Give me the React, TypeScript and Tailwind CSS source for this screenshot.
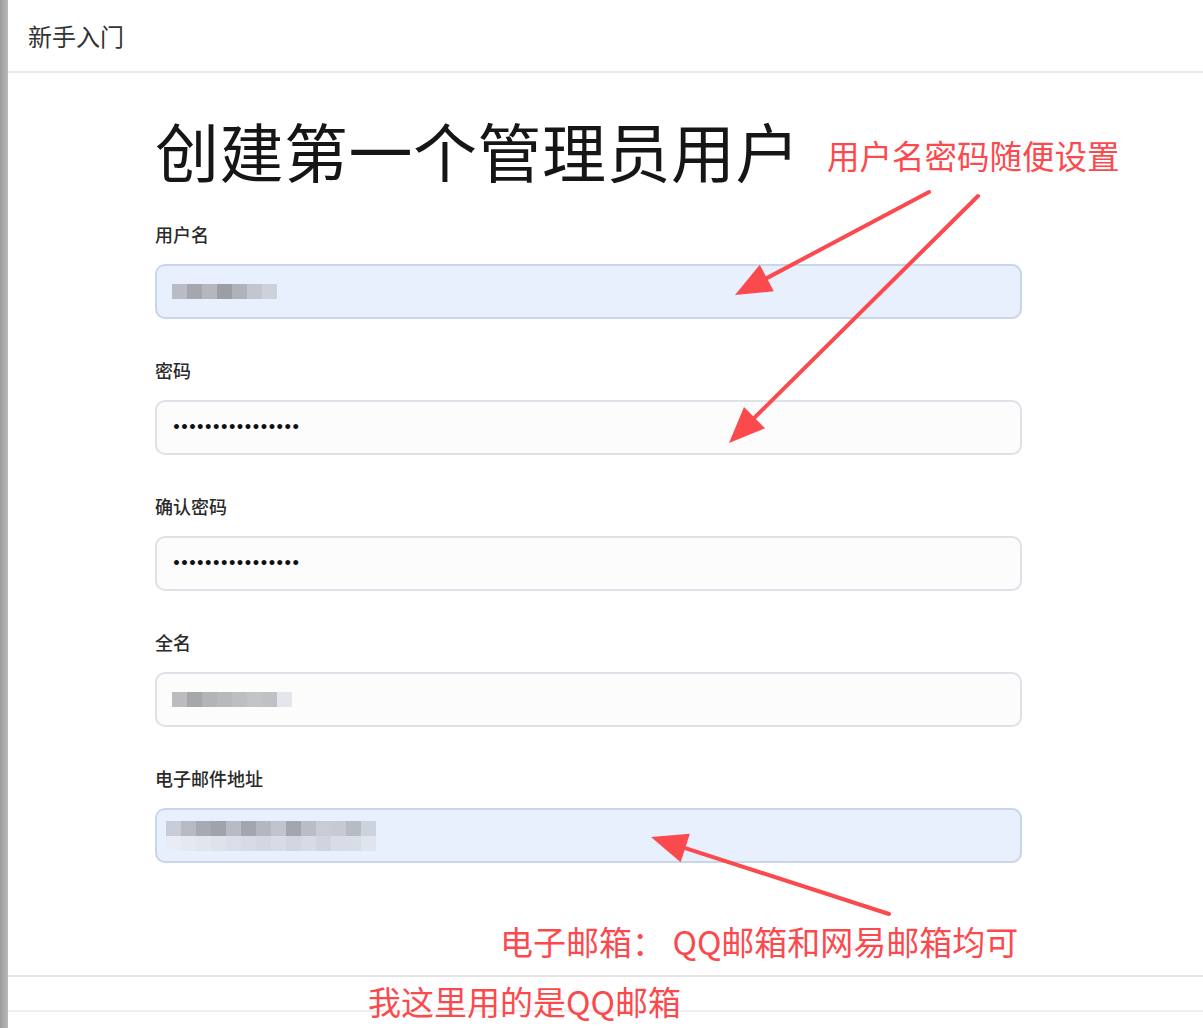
import React from "react";

const cjk = { fontFamily: '"Noto Sans CJK SC", "Noto Sans", sans-serif' };

interface FieldProps {
  label: string;
  filled?: boolean;
  children?: React.ReactNode;
}

const Field: React.FC<FieldProps> = ({ label, filled, children }) => {
  return (
    <div className="mb-[39px]">
      <div className="text-[18px] leading-[24px] text-[#2a2a2a] font-medium mb-[18px]">{label}</div>
      <div
        className={`h-[55px] w-[867px] rounded-[10px] border-2 flex items-center px-[15px] ${
          filled ? "bg-[#e8f0fe] border-[#c9d5e8]" : "bg-[#fcfcfc] border-[#dde2e8]"
        }`}
      >
        {children}
      </div>
    </div>
  );
};

// pixelated blur to stand in for hidden values
const Mosaic: React.FC<{ shades: string[]; size?: number }> = ({ shades, size = 15 }) => (
  <div className="flex blur-[0.6px]">
    {shades.map((c, i) => (
      <div key={i} style={{ background: c, width: size, height: size }} />
    ))}
  </div>
);

const Dots = () => (
  <span className="text-[#111] text-[14px] font-bold tracking-[-1px]" style={{ fontFamily: '"DejaVu Sans", sans-serif' }}>
    ••••••••••••••••
  </span>
);

const Arrow: React.FC<{ x1: number; y1: number; x2: number; y2: number }> = ({ x1, y1, x2, y2 }) => {
  const ang = Math.atan2(y2 - y1, x2 - x1);
  const len = 36;
  const half = 15;
  const bx = x2 - Math.cos(ang) * len;
  const by = y2 - Math.sin(ang) * len;
  const px = -Math.sin(ang) * half;
  const py = Math.cos(ang) * half;
  return (
    <g>
      <line x1={x1} y1={y1} x2={bx} y2={by} stroke="#fb4a4d" strokeWidth={4} strokeLinecap="round" />
      <polygon points={`${x2},${y2} ${bx + px},${by + py} ${bx - px},${by - py}`} fill="#fb4a4d" />
    </g>
  );
};

export default function App() {
  return (
    <div className="w-full h-[1028px] flex bg-white overflow-hidden relative" style={cjk}>
      <div className="w-[8px] h-full bg-gradient-to-r from-[#9c9c9c] to-[#b9b9b9]" />
      <div className="flex-1 flex flex-col">
        <header className="h-[73px] border-b-2 border-[#e9e9e9] flex items-center px-[20px] text-[24px] text-[#333]">
          新手入门
        </header>

        <main className="flex-1 pl-[147px] pt-[36px]">
          <h1 className="text-[64px] leading-[80px] text-[#161616] mb-[33px] tracking-[0.5px]">创建第一个管理员用户</h1>

          <Field label="用户名" filled>
            <Mosaic shades={["#b9bcc4", "#a4a7ae", "#b4b7bf", "#9c9ea6", "#aeb2ba", "#c2c6cf", "#ccd1da"]} />
          </Field>
          <Field label="密码">
            <Dots />
          </Field>
          <Field label="确认密码">
            <Dots />
          </Field>
          <Field label="全名">
            <Mosaic shades={["#bcbcc0", "#a6a7ab", "#b3b4b8", "#b8b9bd", "#bdbec2", "#c3c4c8", "#c0c1c5", "#e3e6ea"]} />
          </Field>
          <Field label="电子邮件地址" filled>
            <div className="-ml-[6px] flex flex-col">
              <Mosaic
                shades={["#c7ccd6", "#b6bac3", "#a6aab3", "#9fa3ac", "#b7bbc4", "#a2a6af", "#b3b7c0", "#c0c4cd", "#a2a6af", "#b9bdc6", "#c7ccd6", "#c5cad3", "#b7bbc4", "#ccd3de"]}
              />
              <Mosaic
                shades={["#e8edf5", "#e4e9f1", "#e0e5ee", "#dde2eb", "#d9dee8", "#d6dbe5", "#d2d7e1", "#d6dbe5", "#d0d5df", "#d6dbe5", "#cfd4de", "#d7dce6", "#d8dde7", "#dfe4ed"]}
              />
            </div>
          </Field>
        </main>

        <footer className="h-[53px] border-t-2 border-[#e4e4e4]">
          <div className="h-[35px] border-b-2 border-[#efefef]" />
        </footer>
      </div>

      {/* annotations drawn over the screenshot */}
      <svg className="absolute inset-0 pointer-events-none" width={1203} height={1028}>
        <Arrow x1={929} y1={192} x2={735} y2={295} />
        <Arrow x1={978} y1={196} x2={729} y2={443} />
        <Arrow x1={889} y1={914} x2={651} y2={837} />
      </svg>
      <div className="absolute left-[827px] top-[134px] text-[32.5px] leading-[42px] text-[#fb4a4d] whitespace-nowrap">用户名密码随便设置</div>
      <div className="absolute left-[500px] top-[920px] text-[33px] leading-[42px] text-[#fb4a4d] whitespace-nowrap">
        电子邮箱： QQ邮箱和网易邮箱均可
      </div>
      <div className="absolute left-[368px] top-[980px] text-[33px] leading-[42px] text-[#fb4a4d] whitespace-nowrap">
        我这里用的是QQ邮箱
      </div>
    </div>
  );
}
